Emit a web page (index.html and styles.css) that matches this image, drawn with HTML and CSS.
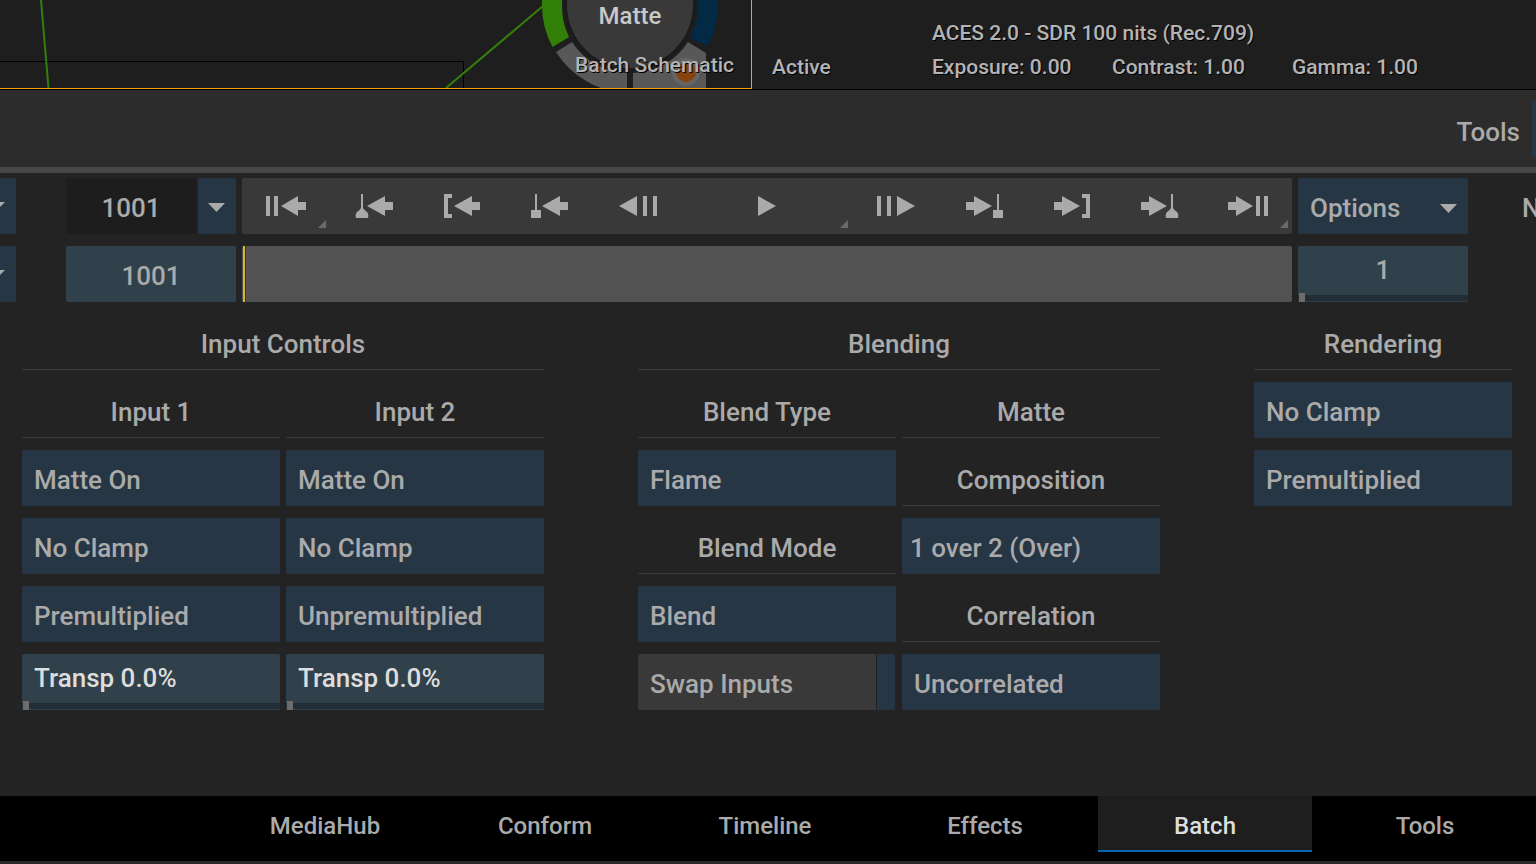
FILE: index.html
```html
<!DOCTYPE html>
<html lang="en">
<head>
    <meta charset="UTF-8">
    <meta name="viewport" content="width=device-width">
    <title>Batch</title>
    <link rel="stylesheet" href="styles.css">
</head>
<body>
    <div class="app">
        <section class="viewers">
            <div class="schematic">
                <svg class="schematic-canvas" width="752" height="88" viewBox="0 0 752 88" aria-hidden="true">
                    <path d="M0 61.5H463.5V88" fill="none" stroke="#000" stroke-width="1"/>
                    <path d="M41 0L48.500 88M446 88L543 6" fill="none" stroke="#338009" stroke-width="2"/>
                    <circle cx="630" cy="5" r="66" fill="#1b1b1b"/>
                    <circle cx="630" cy="5" r="63" fill="#393939"/>
                    <path d="M542 0V5A88 88 0 0 0 552.500 47L569 37A68 68 0 0 1 562 5V0Z" fill="#338009"/>
                    <path d="M718 0V5A88 88 0 0 1 708 46L690 38A68 68 0 0 0 698 5V0Z" fill="#032a45"/>
                    <path d="M556 52L572 42A68 68 0 0 0 627 73V93A88 88 0 0 1 556 52Z" fill="#585858"/>
                    <path d="M633 73A68 68 0 0 0 688 42L706 53V88H633Z" fill="#585858"/>
                    <circle cx="686" cy="72" r="14" fill="#656565"/>
                    <circle cx="686" cy="72" r="10" fill="#86420f"/>
                    <text class="node-name" x="630" y="24" text-anchor="middle">Matte</text>
                </svg>
                <span class="schematic-label">Batch Schematic</span>
            </div>
            <div class="viewer-info">
                <span class="viewer-state">Active</span>
                <div class="colour-info">
                    <p>ACES 2.0 - SDR 100 nits (Rec.709)</p>
                    <p class="readings"><span>Exposure: 0.00</span><span>Contrast: 1.00</span><span>Gamma: 1.00</span></p>
                </div>
            </div>
        </section>

        <header class="toolbar">
            <span>Tools</span>
            <button class="toolbar-edge" aria-label="Tools menu"></button>
        </header>

        <section class="transport">
            <button class="stub" aria-label="View menu"><svg width="6" height="9" viewBox="0 0 6 9"><path d="M0 0H5L0 5Z"/></svg></button>
            <div class="frame">
                <input type="text" value="1001" aria-label="Current frame">
                <button aria-label="Frame format"><svg width="18" height="9" viewBox="0 0 18 9"><path d="M0 0H17L8.500 9Z"/></svg></button>
            </div>
            <div class="playback">
                <button class="more" aria-label="Go to start"><svg viewBox="0 0 88 56"><path d="M24 18h4v20h-4zM32 18h4v20h-4zM39 28L56 18V24H64V32H56V38Z"/></svg></button>
                <button aria-label="Previous keyframe"><svg viewBox="0 0 88 56"><path d="M31 16h2v14q1 2 4 4q2 2 1 6H26q-1-4 1-6q3-2 4-4zM37 28L55 18V24H63V32H55V38Z"/></svg></button>
                <button aria-label="Go to in point"><svg viewBox="0 0 88 56"><path d="M26 16h8v4h-4v16h4v4h-8zM36 28L54 18V24H62V32H54V38Z"/></svg></button>
                <button aria-label="Previous cue mark"><svg viewBox="0 0 88 56"><path d="M29 16h2v16h4v8H25v-8h4zM36 28L54 18V24H62V32H54V38Z"/></svg></button>
                <button aria-label="Step back"><svg viewBox="0 0 88 56"><path d="M25 28L43 18V38ZM49 18h4v20h-4zM59 18h4v20h-4z"/></svg></button>
                <button class="more" aria-label="Play"><svg viewBox="0 0 88 56"><path d="M35 18L53 28L35 38Z"/></svg></button>
                <button aria-label="Step forward"><svg viewBox="0 0 88 56"><path d="M63 28L45 18V38ZM35 18h4v20h-4zM25 18h4v20h-4z"/></svg></button>
                <button aria-label="Next cue mark"><svg viewBox="0 0 88 56"><path d="M57 16h2v16h4v8H53v-8h4zM52 28L34 18V24H26V32H34V38Z"/></svg></button>
                <button aria-label="Go to out point"><svg viewBox="0 0 88 56"><path d="M62 16h-8v4h4v16h-4v4h8zM52 28L34 18V24H26V32H34V38Z"/></svg></button>
                <button aria-label="Next keyframe"><svg viewBox="0 0 88 56"><path d="M55 16h2v14q1 2 4 4q2 2 1 6H50q-1-4 1-6q3-2 4-4zM51 28L33 18V24H25V32H33V38Z"/></svg></button>
                <button class="more" aria-label="Go to end"><svg viewBox="0 0 88 56"><path d="M52 18h4v20h-4zM60 18h4v20h-4zM49 28L32 18V24H24V32H32V38Z"/></svg></button>
            </div>
            <button class="options">Options <svg width="17" height="9" viewBox="0 0 17 9"><path d="M0 0H17L8.500 9Z"/></svg></button>
            <span class="next">N</span>

            <button class="stub" aria-label="Range menu"><svg width="6" height="9" viewBox="0 0 6 9"><path d="M0 0H5L0 5Z"/></svg></button>
            <input class="start" type="text" value="1001" aria-label="Start frame">
            <input class="scrub" type="range" min="1001" max="1100" value="1001" aria-label="Timebar">
            <div class="slider centered">
                <input type="text" value="1" aria-label="End frame">
                <input type="range" value="0" aria-label="End frame slider">
            </div>
        </section>

        <main class="panels">
            <section class="group">
                <h2>Input Controls</h2>
                <h3>Input 1</h3>
                <h3>Input 2</h3>
                <select aria-label="Input 1 matte"><option>Matte On</option></select>
                <select aria-label="Input 2 matte"><option>Matte On</option></select>
                <select aria-label="Input 1 clamp"><option>No Clamp</option></select>
                <select aria-label="Input 2 clamp"><option>No Clamp</option></select>
                <select aria-label="Input 1 multiply"><option>Premultiplied</option></select>
                <select aria-label="Input 2 multiply"><option>Unpremultiplied</option></select>
                <div class="slider bright">
                    <input type="text" value="Transp 0.0%" aria-label="Input 1 transparency">
                    <input type="range" value="0" aria-label="Input 1 transparency slider">
                </div>
                <div class="slider bright">
                    <input type="text" value="Transp 0.0%" aria-label="Input 2 transparency">
                    <input type="range" value="0" aria-label="Input 2 transparency slider">
                </div>
            </section>

            <section class="group">
                <h2>Blending</h2>
                <label for="blend-type">Blend Type</label>
                <h3>Matte</h3>
                <select id="blend-type"><option>Flame</option></select>
                <label for="composition">Composition</label>
                <label for="blend-mode">Blend Mode</label>
                <select id="composition" class="tight"><option>1 over 2 (Over)</option></select>
                <select id="blend-mode"><option>Blend</option></select>
                <label for="correlation">Correlation</label>
                <div class="swap">
                    <button>Swap Inputs</button>
                    <button class="swap-key" aria-label="Animate swap"></button>
                </div>
                <select id="correlation"><option>Uncorrelated</option></select>
            </section>

            <section class="group single">
                <h2>Rendering</h2>
                <select aria-label="Render clamp"><option>No Clamp</option></select>
                <select aria-label="Render multiply"><option>Premultiplied</option></select>
            </section>
        </main>

        <nav class="tabs">
            <a href="#mediahub">MediaHub</a>
            <a href="#conform">Conform</a>
            <a href="#timeline">Timeline</a>
            <a href="#effects">Effects</a>
            <a href="#batch" class="active">Batch</a>
            <a href="#tools">Tools</a>
        </nav>
    </div>
</body>
</html>
```
FILE: styles.css
```css
* {
    box-sizing: border-box;
}

body {
    margin: 0;
    background: #232323;
    color: #aaa;
    font-family: Roboto, sans-serif;
    font-size: 26px;
    font-weight: 500;
    overflow: hidden;
}

h2, h3, p {
    margin: 0;
    font-size: inherit;
    font-weight: inherit;
}

button, input, select {
    margin: 0;
    padding: 0;
    border: none;
    outline: none;
    border-radius: 2px;
    background: #263645;
    color: inherit;
    font: inherit;
    min-width: 0;
}

svg {
    fill: #aaa;
}

.app {
    min-height: 100vh;
    display: flex;
    flex-direction: column;
}

/* top viewers */
.viewers {
    display: grid;
    grid-template-columns: 752fr 784fr;
    height: 90px;
    background: #1e1e1e;
    border-bottom: 1px solid #000;
    font-size: 21px;
    line-height: 34px;
    text-shadow: 1px 1px #000;
    color: #b4b4b4;
}

.schematic {
    position: relative;
    display: flex;
    justify-content: flex-end;
    align-items: flex-end;
    padding: 0 17px 6px 0;
    border-right: 1px solid #f0a30a;
    border-bottom: 1px solid #f0a30a;
    overflow: hidden;
}

.schematic-canvas {
    position: absolute;
    left: 0;
    top: 0;
}

.node-name {
    font-size: 24px;
    fill: #c8c8c8;
    text-shadow: none;
}

.schematic-label {
    position: relative;
}

.viewer-info {
    display: flex;
    align-items: flex-end;
    gap: 40px;
    padding: 0 0 5px 20px;
    white-space: nowrap;
}

.viewer-state {
    width: 120px;
}

.readings {
    display: grid;
    grid-template-columns: repeat(3, 180px);
}

.toolbar {
    display: flex;
    justify-content: flex-end;
    align-items: center;
    gap: 12px;
    height: 83px;
    background: #2c2c2c;
    border-bottom: 6px solid #484848;
}

.toolbar span {
    padding-top: 6px;
}

.toolbar-edge {
    width: 4px;
    height: 56px;
    border-radius: 2px 0 0 2px;
}

/* frame and playback controls */
.transport {
    display: grid;
    grid-template-columns: 60px 170px minmax(0, 1fr) 170px 62px;
    grid-auto-rows: 56px;
    gap: 12px 6px;
    padding-top: 5px;
}

.stub {
    display: flex;
    align-items: center;
    width: 16px;
    height: 56px;
    border-radius: 0 2px 2px 0;
}

.frame {
    display: grid;
    grid-template-columns: 1fr 38px;
    gap: 2px;
}

.frame input {
    background: #1d1d1d;
    text-align: center;
    padding-top: 4px;
}

.frame button {
    display: flex;
    align-items: center;
    justify-content: center;
    padding-top: 2px;
}

.playback {
    display: grid;
    grid-template-columns: repeat(5, 88fr) 170fr repeat(5, 88fr);
    background: #393939;
    border-radius: 2px;
}

.playback button {
    position: relative;
    display: flex;
    justify-content: center;
    align-items: center;
    background: none;
}

.playback svg {
    width: 100%;
    height: 56px;
}

.more::after {
    content: "";
    position: absolute;
    right: 4px;
    bottom: 6px;
    border-left: 8px solid transparent;
    border-bottom: 8px solid #6a6a6a;
}

.options {
    display: flex;
    justify-content: space-between;
    align-items: center;
    padding: 4px 11px 0 12px;
}

.next {
    padding-left: 48px;
    line-height: 60px;
    white-space: nowrap;
    overflow: hidden;
}

.start {
    background: #31414b;
    text-align: center;
    padding-top: 4px;
}

.scrub {
    appearance: none;
    width: 100%;
    background: #525252;
    padding-left: 1px;
}

.scrub::-webkit-slider-thumb {
    appearance: none;
    width: 2px;
    height: 56px;
    background: #d6b62c;
    box-shadow: 1px 0 #333;
}

/* value field with a small slider below */
.slider {
    display: flex;
    flex-direction: column;
    height: 56px;
    background: #31414b;
    border-radius: 2px;
}

.slider input[type="text"] {
    width: 100%;
    height: 47px;
    padding: 1px 12px 0;
    background: none;
}

.slider input[type="range"] {
    appearance: none;
    width: 100%;
    height: 9px;
    padding-left: 1px;
    background: linear-gradient(#31414b 2px, #222d35 2px, #222d35 8px, #31414b 8px);
}

.slider input[type="range"]::-webkit-slider-thumb {
    appearance: none;
    width: 6px;
    height: 9px;
    background: #6c6c6c;
}

.centered input[type="text"] {
    text-align: center;
}

.bright {
    color: #ddd;
}

.panels {
    flex: 1;
    display: grid;
    grid-template-columns: 522fr 522fr 258fr;
    column-gap: 94px;
    padding: 12px 24px 0 22px;
}

.group {
    display: grid;
    grid-template-columns: 1fr 1fr;
    grid-auto-rows: 56px;
    align-content: start;
    gap: 12px 6px;
}

.group.single {
    grid-template-columns: 1fr;
}

.group h2, .group h3, .group label {
    border-bottom: 1px solid #3a3a3a;
    line-height: 60px;
    text-align: center;
    white-space: nowrap;
}

.group h2 {
    grid-column: 1 / -1;
}

.group select {
    appearance: none;
    width: 100%;
    padding: 4px 12px 0;
}

.group .tight {
    padding-left: 8px;
}

.swap {
    display: grid;
    grid-template-columns: 1fr 18px;
    gap: 1px;
    padding-right: 1px;
}

.swap button {
    padding: 4px 12px 0;
    background: #393939;
    text-align: left;
    border-radius: 2px 0 0 2px;
}

.swap .swap-key {
    padding: 0;
    background: #263645;
    border-radius: 0 2px 2px 0;
}

/* bottom tabs */
.tabs {
    display: grid;
    grid-template-columns: repeat(6, 1fr);
    column-gap: 6px;
    height: 68px;
    padding: 0 4px 9px 218px;
    background: #000;
    border-bottom: 3px solid #2b2b2b;
    font-size: 24px;
}

.tabs a {
    padding-top: 7px;
    color: #aaa;
    text-decoration: none;
    text-align: center;
    line-height: 47px;
    border-bottom: 2px solid transparent;
}

.tabs .active {
    background: #1e1e1e;
    color: #ddd;
    border-bottom-color: #0068b0;
}
```
